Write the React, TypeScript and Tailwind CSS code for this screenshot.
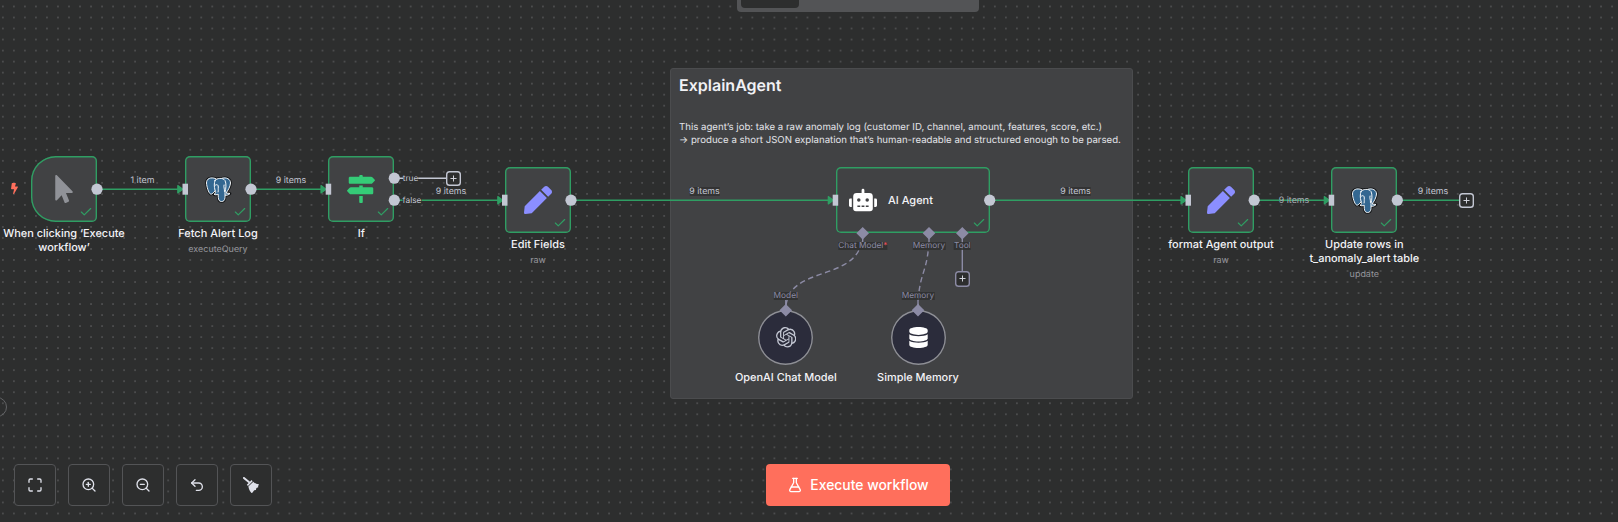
import type { ReactNode } from "react";
import { Check, FlaskConical, Maximize, Plus, Undo2, ZoomIn, ZoomOut } from "lucide-react";
import { FaBolt, FaDatabase, FaMapSigns, FaMousePointer, FaPen, FaRobot } from "react-icons/fa";
import { SiOpenai } from "react-icons/si";

const GREEN = "#2f9e63";
const PORT = "#c3c7d3";
const SUB = "#8c8ba5";

type NodeProps = {
  className: string;
  box?: string;
  title?: ReactNode;
  sub?: string;
  children: ReactNode;
};

function Node({ className, box = "w-[66px] rounded-[5px]", title, sub, children }: NodeProps) {
  return (
    <div className={`absolute flex w-[66px] flex-col items-center ${className}`}>
      <div
        className={`relative flex h-[66px] shrink-0 items-center justify-center bg-[#414244] shadow-[inset_0_0_0_1.4px_#2f9e63] ${box}`}
      >
        {children}
        <Check className="absolute right-[4px] bottom-[3px] h-[14px] w-[14px] text-[#2f9e63]" strokeWidth={2} />
      </div>
      {title && <Title sub={sub}>{title}</Title>}
    </div>
  );
}

function SubNode({ className, title, children }: { className: string; title: string; children: ReactNode }) {
  return (
    <div className={`absolute flex w-[55px] flex-col items-center gap-px ${className}`}>
      <div className="flex h-[55px] w-[55px] shrink-0 items-center justify-center rounded-full bg-[#2b2c3b] shadow-[inset_0_0_0_1.4px_#8e8f94]">
        {children}
      </div>
      <Title>{title}</Title>
    </div>
  );
}

function Title({ children, sub }: { children: ReactNode; sub?: string }) {
  return (
    <div className="flex flex-col items-center pt-[4px] text-center">
      <div className="text-[10.950px] leading-[14px] font-[450] whitespace-nowrap text-[#f3f3f7]">{children}</div>
      {sub && <div className="mt-[4px] text-[8.960px] leading-[11px] whitespace-nowrap text-[#96979d]">{sub}</div>}
    </div>
  );
}

function EdgeLabel({ className, children }: { className: string; children: ReactNode }) {
  return (
    <div className={`absolute -translate-x-1/2 text-[8.850px] leading-[9px] whitespace-nowrap ${className}`}>
      {children}
    </div>
  );
}

function PortLabel({ className, children }: { className: string; children: ReactNode }) {
  return (
    <div className={`absolute -translate-x-1/2 text-[8.300px] leading-[8px] whitespace-nowrap ${className}`}>
      {children}
    </div>
  );
}

function AddButton({ className }: { className: string }) {
  return (
    <div
      className={`absolute flex h-[15.500px] w-[15.500px] items-center justify-center rounded-[3.500px] bg-[#2d2e2e] text-[#d5d7df] ${className}`}
    >
      <Plus className="h-[9px] w-[9px] shrink-0" strokeWidth={2.6} />
    </div>
  );
}

const LEFT_EAR = "M10 2C5 .3 1 2 1 6.500C1.200 10 3 16.500 5 17.500C6.500 18.200 8 16 9.500 14.500Z";
const RIGHT_EAR =
  "M16.500 1.700C21 .5 25 2.500 25 6.500C24.800 10 22.500 14 20.500 16.500L24.500 17C23.500 18.500 21 19 19.300 18.700Z";
const TRUNK =
  "M9.500 4C11 1.500 17.500 .8 19.500 4C21 7 20.500 12 19.500 16V21C19.300 24 18 25 16 25C13.800 25 13 23.500 12.800 21L12.600 17.500C11.500 18.500 9.500 18.500 8.500 17.800C10.500 17 10.500 15.500 9.500 13.500C8.600 10 8.500 7 9.500 4Z";

function Elephant() {
  return (
    <svg viewBox="-1.500 -1.500 29 29" className="h-[29px] w-[29px]" strokeLinejoin="round" strokeLinecap="round">
      <g fill="#336791" stroke="#101214" strokeWidth="2.700">
        <path d={LEFT_EAR} />
        <path d={RIGHT_EAR} />
        <path d={TRUNK} />
      </g>
      <g fill="#336791" stroke="#fff" strokeWidth="0.950">
        <path d={LEFT_EAR} />
        <path d={RIGHT_EAR} />
        <path d={TRUNK} />
        <path
          d="M10 8.500C11.500 7.500 13 8.500 12.800 10.500C12.600 12.500 13 13.500 12.600 15.500M18.500 8.500C17.800 10.500 19.300 12.500 19 15"
          fill="none"
        />
      </g>
    </svg>
  );
}

function Broom() {
  return (
    <svg viewBox="0 0 16 16" className="h-[16.500px] w-[16.500px]" fill="currentColor">
      <path d="M.9 .9L5.700 4.900" stroke="currentColor" strokeWidth="1.900" strokeLinecap="round" />
      <path d="M3.700 7.600L8.300 3L9.400 4L4.800 8.700Z" />
      <path d="M5.200 9.300L10 4.500C11.500 6.300 13.500 7 16 7.200L14.600 8.500L14.800 10L13 10.600L12.500 12.500L10.900 12.900L8.600 15.800C6.500 14 5.700 12 5.200 9.300Z" />
    </svg>
  );
}

function Control({ children }: { children: ReactNode }) {
  return (
    <button className="flex h-[42px] w-[42px] items-center justify-center rounded-[4px] border border-[#535456] bg-[#2d2e2e] text-[#dfe1ea]">
      {children}
    </button>
  );
}

function Edges() {
  return (
    <svg width="1618" height="522" className="absolute inset-0" fill="none">
      <g stroke={GREEN} strokeWidth="1.400">
        <path d="M97 189.200H179M251 189.200H322M394 200.200H499M571 200.200H830M990 200.200H1183M1254 200.200H1326M1397 200.200H1459" />
      </g>
      <path d="M394 178.200H446" stroke={PORT} strokeWidth="1.400" />
      <g fill={GREEN} stroke={GREEN} strokeWidth="1.200" strokeLinejoin="round">
        <path d="M177.800 185.500L182.800 189.200L177.800 192.900ZM321 185.500L326 189.200L321 192.900ZM497.800 196.500L502.800 200.200L497.800 203.900ZM828.300 196.500L833.300 200.200L828.300 203.900ZM1181 196.500L1186 200.200L1181 203.900ZM1324.300 196.500L1329.300 200.200L1324.300 203.900Z" />
      </g>
      <g stroke={SUB} strokeWidth="1.400">
        <path d="M862.700 233C862.700 285 785.800 262 785.800 310" strokeDasharray="5.500 3.500" />
        <path d="M929 233C929 275 918 270 918 310" strokeDasharray="5.500 3.500" />
        <path d="M962.300 233V271M862.700 233V242M929 233V242M785.800 300V310M918 300V310" />
      </g>
    </svg>
  );
}

function Ports() {
  return (
    <svg width="1618" height="522" className="absolute inset-0">
      <g fill={PORT}>
        <circle cx="97" cy="189.200" r="5.600" />
        <circle cx="251" cy="189.200" r="5.600" />
        <circle cx="394.300" cy="178.200" r="5.600" />
        <circle cx="394.300" cy="200.200" r="5.600" />
        <circle cx="571" cy="200.200" r="5.600" />
        <circle cx="989.700" cy="200.200" r="5.600" />
        <circle cx="1254.200" cy="200.200" r="5.600" />
        <circle cx="1397.300" cy="200.200" r="5.600" />
        <rect x="182.500" y="183.700" width="5.500" height="11" />
        <rect x="325.700" y="183.700" width="5.500" height="11" />
        <rect x="502" y="194.700" width="5.500" height="11" />
        <rect x="832.700" y="194.700" width="5.500" height="11" />
        <rect x="1185.500" y="194.700" width="5.500" height="11" />
        <rect x="1328.700" y="194.700" width="5.500" height="11" />
      </g>
      <g fill={SUB}>
        <path d="M862.700 227L869 233.300L862.700 239.600L856.400 233.300ZM929 227L935.300 233.300L929 239.600L922.700 233.300ZM962.300 227L968.600 233.300L962.300 239.600L956 233.300Z" />
        <path d="M785.800 304L792.100 310.300L785.800 316.600L779.500 310.300ZM918 304L924.300 310.300L918 316.600L911.700 310.300Z" />
      </g>
    </svg>
  );
}

export default function App() {
  return (
    <div className="relative flex h-[522px] w-[1618px] flex-col justify-between overflow-hidden bg-[#2d2e2e] font-['Inter',sans-serif] [text-rendering:geometricPrecision]">
      <svg width="1618" height="522" className="absolute inset-0">
        <defs>
          <pattern id="dots" x="-2.650" y="0.970" width="11.022" height="11.022" patternUnits="userSpaceOnUse">
            <circle cx="5.511" cy="5.511" r="0.690" fill="#77787a" />
          </pattern>
        </defs>
        <rect width="1618" height="522" fill="url(#dots)" />
      </svg>

      <div className="absolute top-[68px] left-[670px] h-[330.500px] w-[463px] rounded-[3px] border border-[#4b4c4e] bg-[#414244] px-[8px] text-[#f1f1f5]">
        <h2 className="pt-[6px] text-[16px] leading-[20px] font-semibold">ExplainAgent</h2>
        <p className="mt-[26px] text-[9.650px] leading-[13px] whitespace-nowrap text-[#e3e4e9]">
          This agent’s job: take a raw anomaly log (customer ID, channel, amount, features, score, etc.)
          <br />→ produce a short JSON explanation that’s human-readable and structured enough to be parsed.
        </p>
      </div>

      <Edges />

      <FaBolt className="absolute top-[183px] left-[9px] h-[11px] w-[11px] text-[#ff6f5c]" />
      <Node
        className="top-[156px] left-[31px]"
        box="w-[66px] rounded-l-[24.800px] rounded-r-[5px]"
        title={
          <>
            When clicking ‘Execute
            <br />
            workflow’
          </>
        }
      >
        <FaMousePointer className="h-[28px] w-[18px] text-[#909298]" />
      </Node>
      <Node className="top-[156px] left-[185px]" title="Fetch Alert Log" sub="executeQuery">
        <Elephant />
      </Node>
      <Node className="top-[156px] left-[328.300px]" title="If">
        <FaMapSigns className="h-[28px] w-[28px] text-[#35cb77]" />
      </Node>
      <Node className="top-[167px] left-[505px]" title="Edit Fields" sub="raw">
        <FaPen className="h-[28px] w-[28px] text-[#8b8eff]" />
      </Node>
      <Node className="top-[167px] left-[879.700px]" box="w-[154.300px] rounded-[5px]">
        <FaRobot className="mr-[11px] h-[28px] w-[28px] text-white" />
        <span className="mr-[43.500px] text-[10.950px] font-[450] text-[#f3f3f7]">AI Agent</span>
      </Node>
      <Node className="top-[167px] left-[1188px]" title="format Agent output" sub="raw">
        <FaPen className="h-[28px] w-[28px] text-[#8b8eff]" />
      </Node>
      <Node
        className="top-[167px] left-[1331.300px]"
        title={
          <>
            Update rows in
            <br />
            t_anomaly_alert table
          </>
        }
        sub="update"
      >
        <Elephant />
      </Node>

      <SubNode className="top-[310px] left-[758.300px]" title="OpenAI Chat Model">
        <SiOpenai className="h-[20.500px] w-[20.500px] text-[#c3c7d3]" />
      </SubNode>
      <SubNode className="top-[310px] left-[890.500px]" title="Simple Memory">
        <FaDatabase className="h-[21px] w-[19px] text-white" />
      </SubNode>

      <EdgeLabel className="top-[176px] left-[142.500px] text-[#c3c7d3]">1 item</EdgeLabel>
      <EdgeLabel className="top-[176px] left-[291px] text-[#c3c7d3]">9 items</EdgeLabel>
      <EdgeLabel className="top-[187px] left-[451px] text-[#c3c7d3]">9 items</EdgeLabel>
      <EdgeLabel className="top-[187px] left-[704.500px] bg-[#2d2e2e]/70 text-[#c3c7d3]">9 items</EdgeLabel>
      <EdgeLabel className="top-[187px] left-[1075.500px] bg-[#2d2e2e]/70 text-[#c3c7d3]">9 items</EdgeLabel>
      <EdgeLabel className="top-[196px] left-[1294px] text-[#a9adb6]">9 items</EdgeLabel>
      <EdgeLabel className="top-[187px] left-[1433px] text-[#c3c7d3]">9 items</EdgeLabel>

      <PortLabel className="top-[175px] left-[410.500px] bg-[#2d2e2e] text-[#c3c7d3]">true</PortLabel>
      <PortLabel className="top-[197px] left-[412px] bg-[#2d2e2e] text-[#c3c7d3]">false</PortLabel>
      <PortLabel className="top-[242px] left-[862.900px] bg-[#2d2e2e]/80 text-[#8c8ba5]">
        Chat Model<span className="text-[#f0525f]">*</span>
      </PortLabel>
      <PortLabel className="top-[242px] left-[929px] bg-[#2d2e2e]/80 text-[#8c8ba5]">Memory</PortLabel>
      <PortLabel className="top-[242px] left-[962.300px] bg-[#2d2e2e]/80 text-[#8c8ba5]">Tool</PortLabel>
      <PortLabel className="top-[292px] left-[785.800px] bg-[#2d2e2e]/80 text-[#8c8ba5]">Model</PortLabel>
      <PortLabel className="top-[292px] left-[918px] bg-[#2d2e2e]/80 text-[#8c8ba5]">Memory</PortLabel>

      <Ports />
      <AddButton className="top-[170.500px] left-[445.800px] shadow-[inset_0_0_0_1.4px_#c3c7d3]" />
      <AddButton className="top-[192.500px] left-[1458.500px] shadow-[inset_0_0_0_1.4px_#c3c7d3]" />
      <AddButton className="top-[271px] left-[954.500px] shadow-[inset_0_0_0_1.4px_#8c8ba5]" />

      <div className="absolute top-[397px] left-[-13px] h-[20px] w-[20px] rounded-full border border-[#636466]" />

      <header className="relative ml-[737px] flex h-[12px] w-[242px] rounded-b-[4px] bg-[#535456] px-[4px]">
        <div className="h-[8px] w-[58px] rounded-b-[4px] bg-[#2d2e2e]" />
      </header>

      <footer className="relative flex items-center gap-[494.300px] pb-[16px] pl-[14px]">
        <div className="flex gap-[12px]">
          <Control>
            <Maximize size={16} />
          </Control>
          <Control>
            <ZoomIn size={16} />
          </Control>
          <Control>
            <ZoomOut size={16} />
          </Control>
          <Control>
            <Undo2 size={16} />
          </Control>
          <Control>
            <Broom />
          </Control>
        </div>
        <button className="flex h-[42px] w-[183.400px] items-center justify-center gap-[7px] rounded-[4px] bg-[#ff6f5c] text-[13.900px] font-[450] text-white">
          <FlaskConical size={16} />
          Execute workflow
        </button>
      </footer>
    </div>
  );
}
